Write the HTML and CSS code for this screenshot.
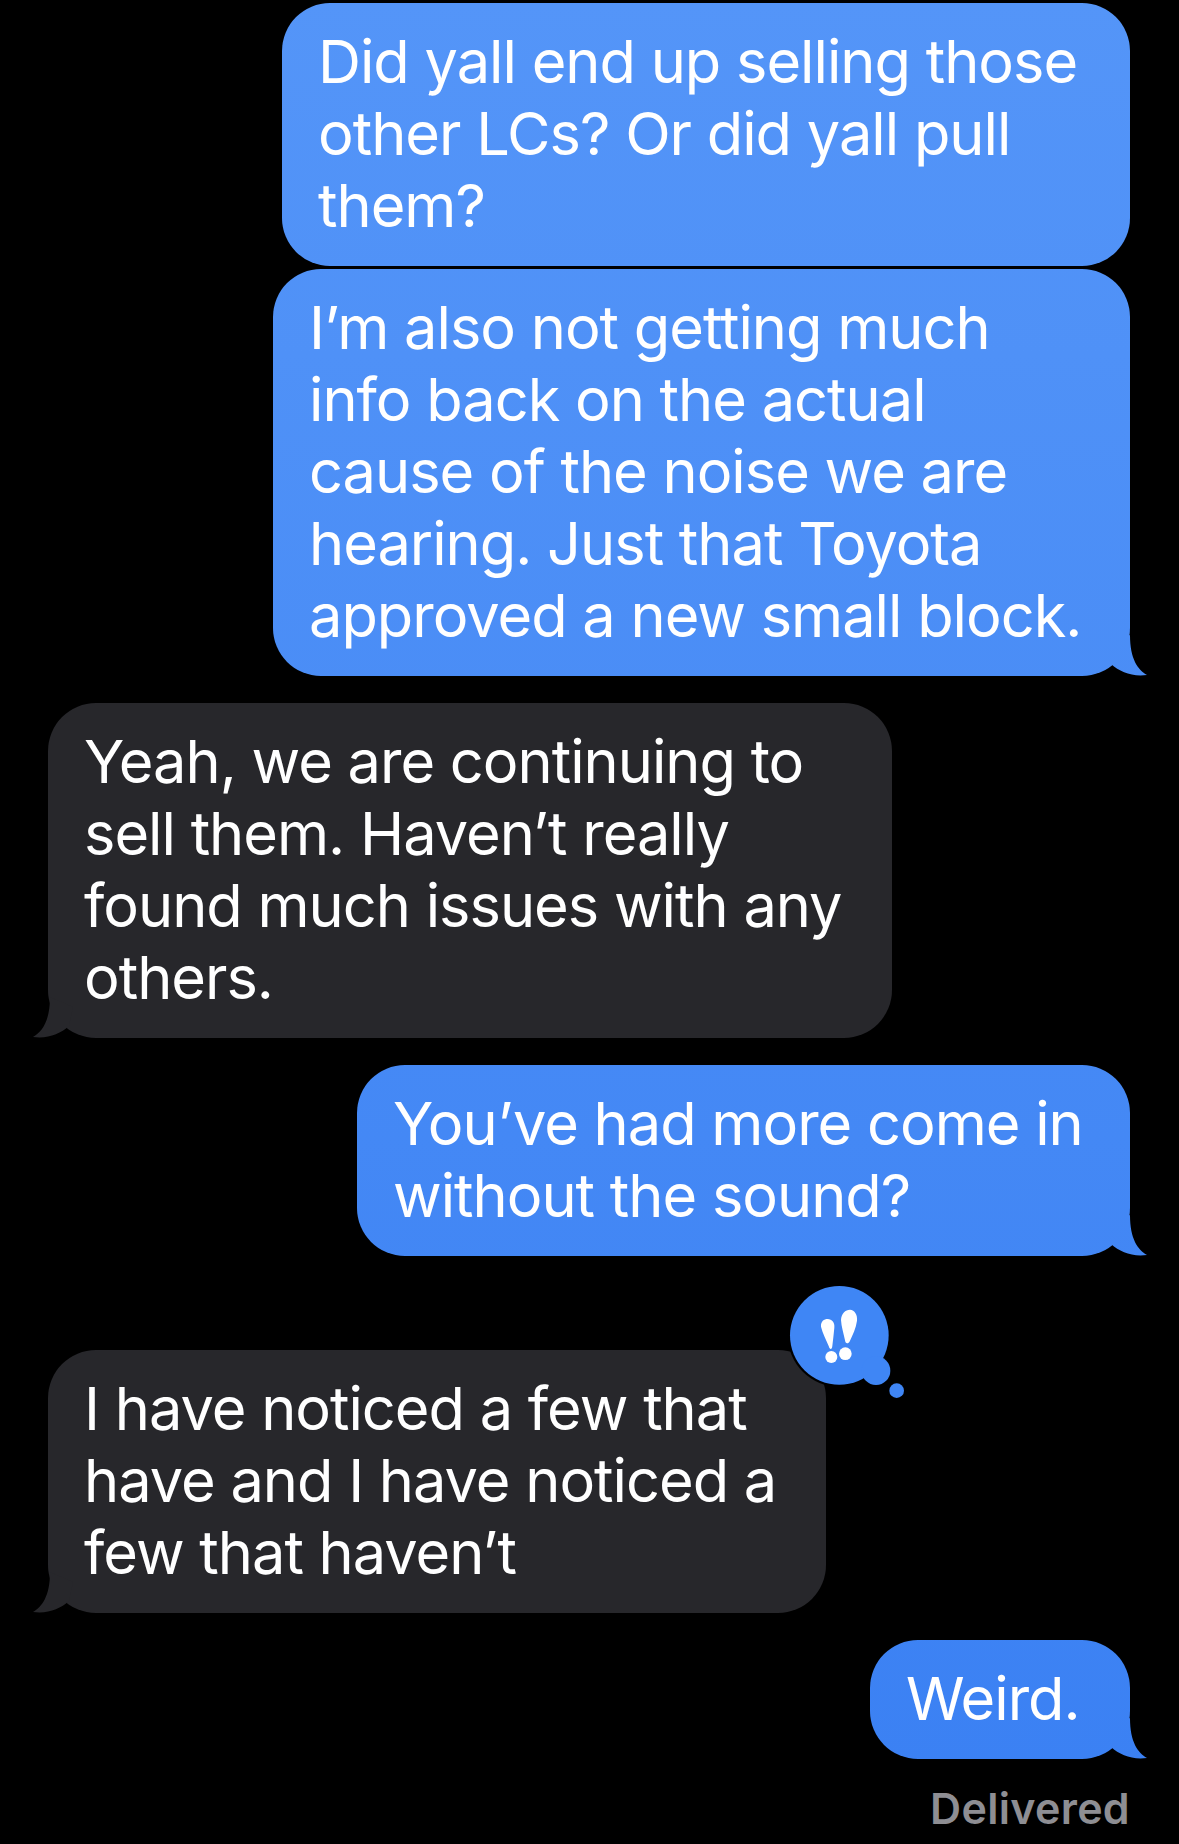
FILE: index.html
```html
<!DOCTYPE html>
<html lang="en">
<head>
<meta charset="utf-8">
<title>Messages</title>
<link rel="stylesheet" href="styles.css">
</head>
<body>
<main class="thread">
  <div class="bubble sent w1">Did yall end up selling those<br>other LCs? Or did yall pull<br>them?</div>
  <div class="bubble sent w2 close">I’m also not getting much<br>info back on the actual<br>cause of the noise we are<br>hearing. Just that Toyota<br>approved a new small block.<span class="tail"></span></div>
  <div class="bubble received w3">Yeah, we are continuing to<br>sell them. Haven’t really<br>found much issues with any<br>others.<span class="tail"></span></div>
  <div class="bubble sent w4">You’ve had more come in<br>without the sound?<span class="tail"></span></div>
  <div class="bubble received w5 far">I have noticed a few that<br>have and I have noticed a<br>few that haven’t<span class="tail"></span>
    <svg class="tapback" viewBox="0 0 540 390" aria-hidden="true">
      <circle cx="208" cy="166" r="155" fill="#000"/>
      <circle cx="208" cy="166" r="148" fill="#3f86f5"/>
      <circle cx="318" cy="272" r="43" fill="#3f86f5"/>
      <circle cx="380" cy="332" r="22" fill="#3f86f5"/>
      <path class="mark" d="M153 140C152 124 162 117 173 117C186 117 195 128 193 143C191 165 189 180 187 198C186 210 179 210 176 198C168 178 158 160 153 140Z"/>
      <circle class="mark" cx="184" cy="231" r="18"/>
      <path class="mark" d="M213 120C214 100 226 89 240 89C254 90 263 104 261 122C258 145 248 165 240 182C235 193 226 192 225 181C221 160 214 140 213 120Z"/>
      <circle class="mark" cx="226" cy="221" r="19"/>
    </svg>
  </div>
  <div class="bubble sent w6">Weird.<span class="tail"></span></div>
  <div class="status">Delivered</div>
</main>
</body>
</html>
```
FILE: styles.css
```css
html, body {
  margin: 0;
  height: 100%;
  background: #000;
}

body {
  overflow: hidden;
}

.thread {
  display: flex;
  flex-direction: column;
  padding: 3px 49px 0 48px;
  font-family: Inter, "Liberation Sans", sans-serif;
}

.bubble {
  position: relative;
  box-sizing: border-box;
  margin-top: 27px;
  padding: 22px 36px 25px;
  border-radius: 48px;
  color: #fff;
  font-size: 59.5px;
  line-height: 72px;
  letter-spacing: -1px;
  white-space: nowrap;
}

.bubble:first-child {
  margin-top: 0;
}

.sent {
  align-self: flex-end;
  background: linear-gradient(180deg, #5495f8 0, #3a80f3 1844px) fixed;
}

.received {
  align-self: flex-start;
  background: #27272b;
}

.close {
  margin-top: 3px;
}

.far {
  margin-top: 94px;
}

.w1 { width: 848px; }
.w2 { width: 857px; }
.w3 { width: 844px; }
.w4 { width: 773px; }
.w5 { width: 778px; }
.w6 { width: 260px; }

.tail {
  position: absolute;
  bottom: 0;
  width: 60px;
  height: 41px;
  background: inherit;
  clip-path: path("M43 0C43 24 51 35 60 40C45 42 33 37 24 29L20 10Z");
}

.sent .tail {
  right: -17px;
}

.received .tail {
  left: -15px;
  transform: scaleX(-1);
}

.tapback {
  position: absolute;
  left: 722px;
  top: -70px;
  width: 180px;
  height: 130px;
}

.mark {
  fill: #fff;
}

.status {
  align-self: flex-end;
  margin-top: 25px;
  color: #8e8e93;
  font-size: 43px;
  font-weight: 600;
  line-height: 48px;
  letter-spacing: 0.3px;
}
```
